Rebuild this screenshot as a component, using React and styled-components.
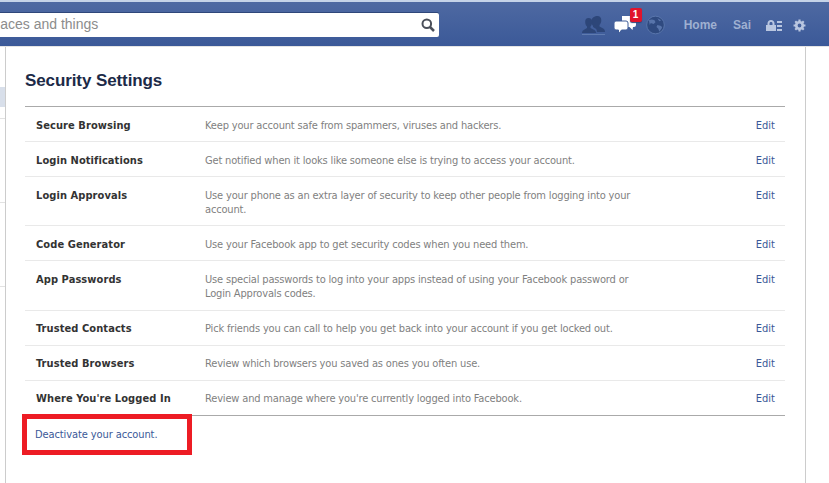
import React from 'react'
import styled, { createGlobalStyle } from 'styled-components'

const GlobalStyle = createGlobalStyle`
  html, body {
    margin: 0;
    padding: 0;
    background: #fff;
    overflow: hidden;
  }
  body {
    font-family: "DejaVu Sans", "Liberation Sans", sans-serif;
    font-stretch: condensed;
    font-size: 11px;
    color: #333;
  }
`

const Page = styled.div`
  width: 829px;
  height: 483px;
  display: flex;
  flex-direction: column;
  overflow: hidden;
`

const TopBar = styled.header`
  height: 44px;
  flex: none;
  display: flex;
  align-items: center;
  justify-content: space-between;
  border-top: 2px solid #c5d3e8;
  border-bottom: 1px solid #e4e4e4;
  background: linear-gradient(#4e69a2, #3b5998);
  overflow: hidden;
`

const Search = styled.div`
  width: 576px;
  height: 24px;
  margin-left: -137px;
  margin-top: 2px;
  flex: none;
  display: flex;
  align-items: center;
  justify-content: space-between;
  box-sizing: border-box;
  padding: 0 4px 0 8px;
  background: #fff;
  border-radius: 2px;
  color: #8c8c8c;
  font-family: "Liberation Sans", Arial, sans-serif;
  font-size: 14px;
  white-space: nowrap;
  box-shadow: 0 -1px 0 #2f477a;
`

const SearchText = styled.span`
  margin-bottom: 3px;
`

const Nav = styled.nav`
  display: flex;
  align-items: center;
  margin-right: 23px;
  margin-top: 2px;
  color: #9fb0d1;
  font-family: "Liberation Sans", Arial, sans-serif;
  font-size: 12px;
  font-weight: bold;
`

const IconSlot = styled.span`
  position: relative;
  display: flex;
  margin-right: ${p => p.$gap}px;
`

const Badge = styled.span`
  position: absolute;
  top: -7px;
  right: -6px;
  width: 12px;
  height: 14px;
  background: #e0142c;
  color: #fff;
  border-radius: 2px;
  font-size: 10px;
  line-height: 14px;
  text-align: center;
  font-weight: bold;
  box-shadow: 0 1px 1px #2f477a;
`

const NavLink = styled.span`
  margin-right: ${p => p.$gap}px;
`

const Body = styled.div`
  flex: 1;
  display: flex;
  min-height: 0;
`

const Sidebar = styled.aside`
  width: 5px;
  flex: none;
  padding-top: 40px;
`

const SideItem = styled.div`
  box-sizing: border-box;
  height: ${p => p.$h}px;
  background: ${p => (p.$active ? '#d8dfea' : 'transparent')};
  border-bottom: ${p => (p.$line ? '1px solid #e2e2e2' : 'none')};
`

const Main = styled.main`
  width: 801px;
  flex: none;
  box-sizing: border-box;
  border-left: 1px solid #ccc;
  border-right: 1px solid #ccc;
  padding: 24px 19px 0;
`

const Title = styled.h2`
  margin: 0 0 15px;
  height: 20px;
  font-family: "Liberation Sans", Arial, sans-serif;
  font-size: 17px;
  line-height: 20px;
  font-weight: bold;
  letter-spacing: -0.1px;
  color: #1c2a47;
`

const Table = styled.div`
  width: 760px;
  border-top: 1px solid #aaa;
  border-bottom: 1px solid #aaa;
`

const Row = styled.div`
  display: flex;
  box-sizing: border-box;
  height: ${p => p.$h}px;
  padding-top: ${p => p.$pad}px;
  line-height: 14px;
  border-top: ${p => (p.$first ? 'none' : '1px solid #e9e9e9')};
`

const Name = styled.div`
  width: 169px;
  margin-left: 11px;
  flex: none;
  font-weight: bold;
  letter-spacing: 0.08px;
  color: #333;
  white-space: nowrap;
`

const Desc = styled.div`
  width: 440px;
  flex: none;
  letter-spacing: -0.165px;
  color: #7f7f7f;
`

const Edit = styled.a`
  margin-left: auto;
  margin-right: 10px;
  color: #3b5998;
`

const Footer = styled.div`
  position: relative;
  padding: 12px 10px;
  line-height: 14px;
  letter-spacing: -0.1px;
  color: #3b5998;
`

const Highlight = styled.div`
  position: absolute;
  left: -3px;
  top: -2px;
  width: 170px;
  height: 41px;
  box-sizing: border-box;
  border: 5px solid #ed1c24;
`

const rows = [
  ['Secure Browsing', 'Keep your account safe from spammers, viruses and hackers.', 34, 12],
  ['Login Notifications', 'Get notified when it looks like someone else is trying to access your account.', 35, 12],
  ['Login Approvals', 'Use your phone as an extra layer of security to keep other people from logging into your account.', 49, 12],
  ['Code Generator', 'Use your Facebook app to get security codes when you need them.', 35, 12],
  ['App Passwords', 'Use special passwords to log into your apps instead of using your Facebook password or Login Approvals codes.', 50, 12],
  ['Trusted Contacts', 'Pick friends you can call to help you get back into your account if you get locked out.', 35, 11],
  ['Trusted Browsers', 'Review which browsers you saved as ones you often use.', 35, 11],
  ["Where You're Logged In", "Review and manage where you're currently logged into Facebook.", 35, 11],
]

const FriendsIcon = () => (
  <svg width="23" height="20" viewBox="0 0 23 20" fill="#2d4679">
    <path d="M15.500 1c2.500 0 3.800 1.800 3.800 4.300 0 2-.8 3.700-1.800 4.700v1.500l3.700 2c1 .5 1.800 1.500 1.800 3.500h-8c0-2-.8-3-2-3.700l-2-1.300v-1c-1-1-1.700-2.700-1.700-4.700C9.300 2.800 13 1 15.500 1z" />
    <path d="M6.500 3c2.400 0 3.600 1.600 3.600 4 0 2-.6 3.500-1.600 4.500V13l3.800 2c1 .5 1.700 1.500 1.700 3H0c0-1.500.7-2.500 1.700-3l3.300-2v-1.500C4 10.500 3.200 9 3.200 7c0-2.400 1-4 3.300-4z" />
    <rect x="0" y="19" width="23" height="1" fill="#5f7bb0" />
  </svg>
)

const MessagesIcon = () => (
  <svg width="22" height="20" viewBox="0 0 22 20" fill="#fff">
    <path d="M8 1h12a2 2 0 0 1 2 2v7a2 2 0 0 1-2 2h-1l-.5 3-3-3H8z" />
    <path d="M2 6h10a2 2 0 0 1 2 2v5a2 2 0 0 1-2 2H7.500L4.500 19v-4H2a2 2 0 0 1-2-2V8a2 2 0 0 1 2-2z" stroke="#3f5c98" strokeWidth="1" />
  </svg>
)

const GlobeIcon = () => (
  <svg width="19" height="20" viewBox="0 0 20 20">
    <circle cx="10" cy="10" r="9.300" fill="#2f4a80" stroke="#5a76ac" strokeWidth="1" />
    <path d="M3 5c2-1 4-1 6 0l1 2-2 2-3-1-1 2zM12 10l4 1 1 2-3 4-1-3-2-2zM12 3l4 2-2 1z" fill="#5874aa" />
  </svg>
)

const LockIcon = () => (
  <svg width="16" height="11" viewBox="0 0 16 11" fill="#b9c6e0">
    <path d="M1.500 5V3.500C1.500 1.200 3 0 5 0s3.500 1.200 3.500 3.500V5H10v6H0V5zm2 0h3V3.500C6.500 2.500 6 2 5 2s-1.500.5-1.500 1.500z" />
    <rect x="11" y="1" width="5" height="2" />
    <rect x="11" y="5" width="5" height="2" />
    <rect x="11" y="9" width="5" height="2" />
  </svg>
)

const GearIcon = () => (
  <svg width="13" height="13" viewBox="0 0 24 24" fill="none" stroke="#b9c6e0">
    <circle cx="12" cy="12" r="6" strokeWidth="5" />
    <path d="M12 1v5M12 18v5M1 12h5M18 12h5M4.200 4.200l3.500 3.500M16.300 16.300l3.500 3.500M4.200 19.800l3.500-3.500M16.300 7.700l3.500-3.500" strokeWidth="4" />
  </svg>
)

const SearchIcon = () => (
  <svg width="14" height="14" viewBox="0 0 14 14" fill="none" stroke="#4a4f5a">
    <circle cx="5.800" cy="5.800" r="4.300" strokeWidth="2" />
    <path d="M9 9l4 4" strokeWidth="2.500" />
  </svg>
)

const App = () => (
  <Page>
    <GlobalStyle />
    <TopBar>
      <Search>
        <SearchText>Search for people, places and things</SearchText>
        <SearchIcon />
      </Search>
      <Nav>
        <IconSlot $gap={9}><FriendsIcon /></IconSlot>
        <IconSlot $gap={10}>
          <MessagesIcon />
          <Badge>1</Badge>
        </IconSlot>
        <IconSlot $gap={19}><GlobeIcon /></IconSlot>
        <NavLink $gap={16}>Home</NavLink>
        <NavLink $gap={15}>Sai</NavLink>
        <IconSlot $gap={11}><LockIcon /></IconSlot>
        <GearIcon />
      </Nav>
    </TopBar>
    <Body>
      <Sidebar>
        <SideItem $h={20} $active />
        <SideItem $h={12} $line />
        <SideItem $h={84} $line />
        <SideItem $h={84} $line />
      </Sidebar>
      <Main>
        <Title>Security Settings</Title>
        <Table>
          {rows.map(([name, desc, h, pad], i) => (
            <Row key={name} $h={h} $pad={pad} $first={i === 0}>
              <Name>{name}</Name>
              <Desc>{desc}</Desc>
              <Edit>Edit</Edit>
            </Row>
          ))}
        </Table>
        <Footer>
          Deactivate your account.
          <Highlight />
        </Footer>
      </Main>
    </Body>
  </Page>
)

export default App
